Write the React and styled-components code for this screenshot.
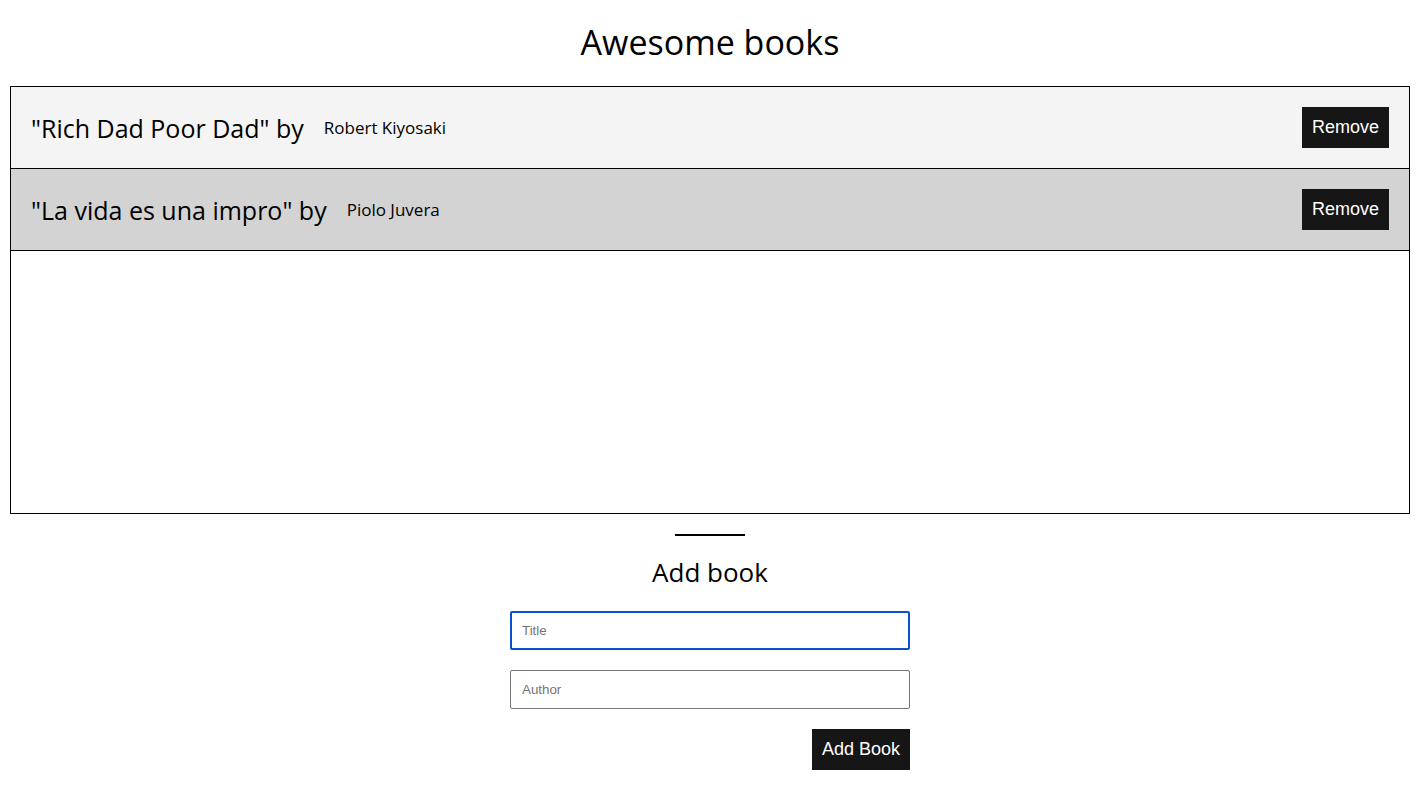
import React from 'react';
import styled, { createGlobalStyle } from 'styled-components';

const GlobalStyle = createGlobalStyle`
  body {
    margin: 0;
    background: #fff;
    font-family: "Open Sans", "Liberation Sans", sans-serif;
    color: #000;
  }
`;

const Page = styled.main`
  display: flex;
  flex-direction: column;
  align-items: center;
  padding: 0 15px 0 10px;
`;

const Heading = styled.h1`
  margin: 18px 0 20px;
  height: 48px;
  line-height: 48px;
  font-size: 34px;
  font-weight: 400;
`;

const BookList = styled.ul`
  align-self: stretch;
  list-style: none;
  margin: 0;
  padding: 0;
  height: 428px;
  box-sizing: border-box;
  border: 1px solid #000;
`;

const BookRow = styled.li`
  display: flex;
  align-items: center;
  height: 82px;
  box-sizing: border-box;
  padding: 0 20px;
  background: ${(p) => (p.shade ? '#d3d3d3' : '#f4f4f4')};
  border-bottom: 1px solid #000;
`;

const BookTitle = styled.span`
  font-size: 25px;
  margin-right: 20px;
`;

const BookAuthor = styled.span`
  font-size: 17px;
  flex: 1;
`;

const DarkButton = styled.button`
  background: #161616;
  color: #fff;
  border: none;
  font-family: "Liberation Sans", Arial, sans-serif;
  font-size: 18px;
  height: 41px;
  padding: 0 10px;
  cursor: pointer;
`;

const Divider = styled.hr`
  width: 70px;
  border: none;
  border-top: 2px solid #000;
  margin: 20px 0 0;
`;

const SubHeading = styled.h2`
  margin: 18px 0 21px;
  font-size: 26px;
  font-weight: 400;
  line-height: 36px;
`;

const Form = styled.form`
  display: flex;
  flex-direction: column;
  align-items: flex-end;
  gap: 20px;
  width: 400px;
`;

const Field = styled.input`
  width: 100%;
  height: 39px;
  box-sizing: border-box;
  font-family: "Liberation Sans", Arial, sans-serif;
  font-size: 13.33px;
  border-radius: 2px;
  outline: none;
  border: ${(p) => (p.focused ? '2px solid #0b4fce' : '1px solid #767676')};
  padding: 0 ${(p) => (p.focused ? '10px' : '11px')};
  &::placeholder {
    color: #757575;
  }
`;

const books = [
  { title: 'Rich Dad Poor Dad', author: 'Robert Kiyosaki' },
  { title: 'La vida es una impro', author: 'Piolo Juvera' },
];

const App = () => {
  return (
    <Page>
      <GlobalStyle />
      <Heading>Awesome books</Heading>
      <BookList>
        {books.map((b, i) => (
          <BookRow key={b.title} shade={i % 2 === 1}>
            <BookTitle>"{b.title}" by</BookTitle>
            <BookAuthor>{b.author}</BookAuthor>
            <DarkButton type="button">Remove</DarkButton>
          </BookRow>
        ))}
      </BookList>
      <Divider />
      <SubHeading>Add book</SubHeading>
      <Form onSubmit={(e) => e.preventDefault()}>
        <Field focused placeholder="Title" />
        <Field placeholder="Author" />
        <DarkButton type="submit">Add Book</DarkButton>
      </Form>
    </Page>
  );
};

export default App;
